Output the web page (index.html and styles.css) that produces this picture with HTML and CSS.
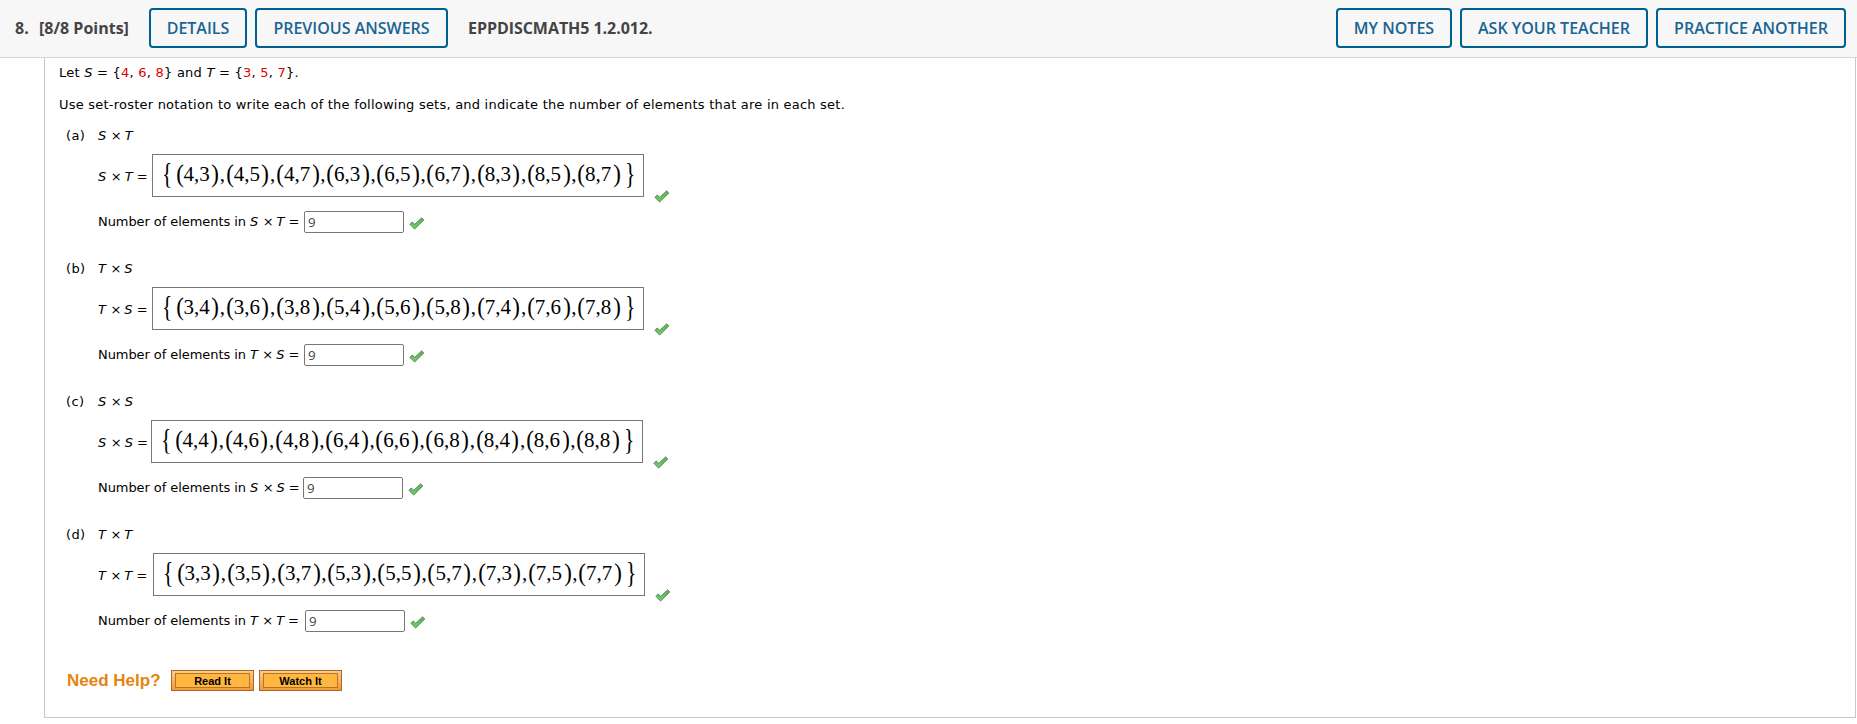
FILE: index.html
```
<!DOCTYPE html>
<html lang="en">
<head>
<meta charset="utf-8">
<title>Question 8</title>
<link rel="stylesheet" href="styles.css">
</head>
<body>
<svg class="defs" width="0" height="0" aria-hidden="true">
  <defs>
    <linearGradient id="green" x1="0" y1="0" x2="0" y2="1"><stop offset="0" stop-color="#5fae5f"/><stop offset="1" stop-color="#79cc74"/></linearGradient>
    <symbol id="check" viewBox="0 0 16 13"><path d="M1 7.3 3.3 5l2.5 2.4L12.6.9 14.8 2.9 5.6 12z" fill="url(#green)" stroke="#468a46" stroke-width="1" stroke-linejoin="round"/></symbol>
  </defs>
</svg>
<header class="bar">
  <span class="number">8.</span><span class="points">[8/8 Points]</span>
  <button class="btn details">DETAILS</button>
  <button class="btn previous">PREVIOUS ANSWERS</button>
  <span class="code">EPPDISCMATH5 1.2.012.</span>
  <button class="btn notes">MY NOTES</button>
  <button class="btn ask">ASK YOUR TEACHER</button>
  <button class="btn practice">PRACTICE ANOTHER</button>
</header>
<main class="pane">
  <p class="given">Let <i>S</i> = {<b>4</b>, <b>6</b>, <b>8</b>} and <i>T</i> = {<b>3</b>, <b>5</b>, <b>7</b>}.</p>
  <p class="task">Use set-roster notation to write each of the following sets, and indicate the number of elements that are in each set.</p>
  <div id="parts"></div>
  <footer class="help"><span class="need">Need Help?</span><button class="orange"><span>Read It</span></button><button class="orange"><span>Watch It</span></button></footer>
</main>
<script src="parts.js"></script>
</body>
</html>
```
FILE: parts.js
```
const sets = { S: [4, 6, 8], T: [3, 5, 7] };
const parts = [['a', 'S', 'T', 0], ['b', 'T', 'S', 0], ['c', 'S', 'S', -1], ['d', 'T', 'T', 1]];
const check = '<svg class="check"><use href="#check"/></svg>';

document.getElementById('parts').innerHTML = parts.map(([letter, x, y, shift]) => {
  const name = `<i>${x}</i><span class="times">×</span><i>${y}</i>`;
  const pairs = sets[x].flatMap(m => sets[y].map(n =>
    `<span class="pair"><span class="paren">(</span><span class="nums">${m},${n}</span><span class="paren">)</span></span>`
  )).join('<span class="comma">,</span>');
  return `<section class="part">
    <div class="title"><span class="letter">(${letter})</span><span>${name}</span></div>
    <div class="equation"><span class="lhs" style="width:${54 + shift}px">${name} =</span>
      <div class="answer"><span class="brace">{</span>${pairs}<span class="brace close">}</span></div>${check}</div>
    <div class="count"><span class="count-label" style="width:${206 + shift}px">Number of elements in ${name} =</span>
      <input class="field" value="9">${check}</div>
  </section>`;
}).join('');
```
FILE: styles.css
```
* { box-sizing: border-box; }
body { margin: 0; height: 724px; overflow: hidden; background: #fff; color: #000; font: 13px "DejaVu Sans", Verdana, sans-serif; }
.defs { display: block; }
.bar { display: flex; align-items: center; height: 58px; padding: 0 11px 2px 15px; background: #f7f7f7; border-bottom: 1px solid #d5d5d5; font: 700 16px "Open Sans", sans-serif; color: #444; white-space: nowrap; }
.number { width: 24px; }
.points { width: 110px; }
.code { letter-spacing: -.05px; }
.btn { height: 40px; padding: 0; border: 2px solid #00608f; border-radius: 4px; background: #f7f7f7; color: #1a6494; font: 600 16px "Open Sans", sans-serif; white-space: nowrap; }
.details { width: 98px; margin-right: 8px; }
.previous { width: 193px; margin-right: 20px; }
.notes { width: 116px; margin-left: auto; }
.ask { width: 188px; margin: 0 8px; }
.practice { width: 190px; }
.pane { height: 660px; margin: 0 1px 0 44px; padding: 4px 0 0 14px; border: 1px solid #c8c8c8; border-top: 0; }
p { margin: 0; white-space: nowrap; }
.given { height: 22px; line-height: 22px; letter-spacing: .23px; }
.given b { font-weight: 400; color: #e00000; }
.task { height: 22px; margin-top: 10px; line-height: 22px; letter-spacing: .22px; }
.part { height: 133px; padding-left: 7px; white-space: nowrap; }
#parts { padding-top: 9px; }
.title { display: flex; height: 22px; line-height: 22px; }
.letter { width: 32px; letter-spacing: .4px; }
.times { margin: 0 3px 0 4.5px; }
.equation { display: flex; margin: 7px 0 0 32px; height: 57px; }
.lhs { line-height: 45px; }
.answer { display: flex; width: 492px; height: 43px; padding-left: 9px; border: 1px solid #777; font: 21px/38px "Liberation Serif", serif; }
.brace { width: 13.5px; font-size: 27px; line-height: 37px; transform: scale(.8, 1.12); transform-origin: left; }
.close { width: 12px; margin-left: 4px; }
.pair { display: flex; }
.paren { width: 8px; font-size: 25px; line-height: 37px; transform: scale(.92, 1.05); }
.nums { width: 27.8px; }
.comma { width: 6.4px; text-align: center; }
.check { width: 16px; height: 13px; flex: none; }
.equation .check { margin: 36px 0 0 10px; }
.count { display: flex; height: 22px; margin-left: 32px; line-height: 22px; }
.count-label { letter-spacing: -.07px; }
.field { width: 100px; height: 22px; padding: 0 3px 1px; border: 1px solid #777; border-radius: 2px; font: 13.3px "Open Sans", sans-serif; letter-spacing: 0; color: #444; }
.count .check { margin: 6px 0 0 5px; }
.help { display: flex; align-items: center; height: 21px; padding-left: 8px; margin-top: 13px; }
.need { width: 104px; color: #e6840f; font: bold 17px "Liberation Sans", Arial, sans-serif; white-space: nowrap; }
.orange { display: flex; width: 83px; height: 21px; margin-right: 5px; padding: 2px 3px; border: 1px solid #a8692a; background: linear-gradient(#ffc98a, #f49a37); font: bold 11px "Liberation Sans", Arial, sans-serif; }
.orange span { flex: 1; height: 15px; border: 1px solid #b87424; background: #ffb73f; line-height: 14px; }
```
